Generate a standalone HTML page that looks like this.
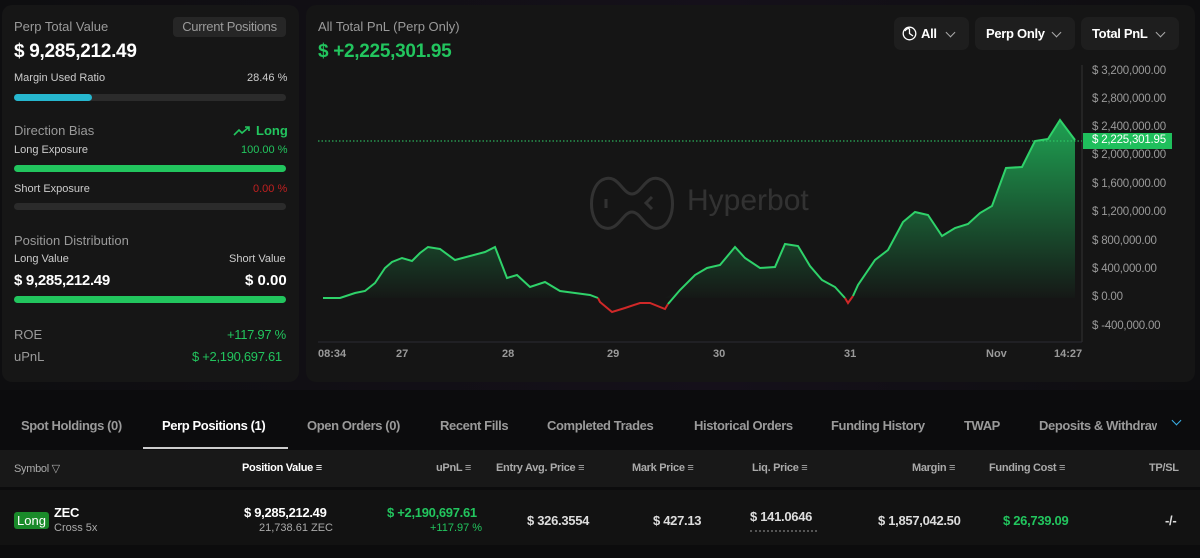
<!DOCTYPE html>
<html><head><meta charset="utf-8"><style>
*{margin:0;padding:0;box-sizing:border-box}
body{width:1200px;height:558px;overflow:hidden;background:#0c0c0d;font-family:"Liberation Sans",sans-serif;color:#fff;position:relative}
.top{position:absolute;left:0;top:0;width:1200px;height:390px;background:linear-gradient(90deg,#0e0e10,#15101a 60%,#0e0e10)}
.panel{position:absolute;background:#161616;border-radius:10px}
.t{position:absolute;white-space:nowrap}
.bar{position:absolute;height:7px;border-radius:4px;background:#2b2b2b}
.btn{position:absolute;top:17px;height:33px;background:#1e1e1e;border-radius:7px;font-weight:bold;font-size:13px;line-height:33px;padding-left:11px;letter-spacing:-0.3px;white-space:nowrap}
.chev{position:absolute;top:12px;width:7px;height:7px;border-right:1.3px solid #aaa;border-bottom:1.3px solid #aaa;transform:rotate(45deg)}
.yl{position:absolute;left:1092px;font-size:11.5px;color:#9a9a9a;letter-spacing:-0.2px;white-space:nowrap}
.xl{position:absolute;top:348px;font-size:11px;color:#9a9a9a;font-weight:bold}
.tab{position:absolute;top:418px;font-size:13px;color:#9a9a9a;font-weight:bold;letter-spacing:-0.4px;white-space:nowrap}
.th{position:absolute;top:462px;font-size:11px;color:#aaa;font-weight:bold;letter-spacing:-0.3px;white-space:nowrap}
.td{position:absolute;font-size:13px;font-weight:bold;color:#ddd;letter-spacing:-0.3px;white-space:nowrap}
.g{color:#22c55e !important}.gr{color:#9a9a9a}
</style></head><body>
<div class="top"></div>
<div class="panel" style="left:2px;top:5px;width:297px;height:377px"></div>
<div class="t gr" style="left:14px;top:19px;font-size:13px">Perp Total Value</div>
<div class="t" style="left:173px;top:17px;width:113px;height:20px;background:#262626;border-radius:4px;color:#9a9a9a;font-size:13px;text-align:center;line-height:20px;letter-spacing:-0.3px">Current Positions</div>
<div class="t" style="left:14px;top:41px;font-size:19px;font-weight:bold;letter-spacing:-0.3px">$ 9,285,212.49</div>
<div class="t" style="left:14px;top:72px;font-size:11px;color:#ccc">Margin Used Ratio</div>
<div class="t" style="left:247px;top:72px;font-size:11px;color:#ccc">28.46 %</div>
<div class="bar" style="left:14px;top:94px;width:272px"></div>
<div class="bar" style="left:14px;top:94px;width:78px;background:#26b7cf"></div>
<div class="t gr" style="left:14px;top:123px;font-size:13px">Direction Bias</div>
<svg style="position:absolute;left:233px;top:125px" width="18" height="12" viewBox="0 0 18 12"><path d="M1 10 L6 5 L9 8 L16 2 M12 2 H16 V6" stroke="#22c55e" stroke-width="1.6" fill="none"/></svg>
<div class="t g" style="left:256px;top:123px;font-size:13px;font-weight:bold">Long</div>
<div class="t" style="left:14px;top:144px;font-size:11px;color:#ccc">Long Exposure</div>
<div class="t g" style="left:241px;top:144px;font-size:11px">100.00 %</div>
<div class="bar" style="left:14px;top:165px;width:272px;background:#22c55e"></div>
<div class="t" style="left:14px;top:183px;font-size:11px;color:#ccc">Short Exposure</div>
<div class="t" style="left:253px;top:183px;font-size:11px;color:#c02020">0.00 %</div>
<div class="bar" style="left:14px;top:203px;width:272px"></div>
<div class="t gr" style="left:14px;top:233px;font-size:13px">Position Distribution</div>
<div class="t" style="left:14px;top:253px;font-size:11px;color:#ccc">Long Value</div>
<div class="t" style="left:229px;top:253px;font-size:11px;color:#ccc">Short Value</div>
<div class="t" style="left:14px;top:272px;font-size:15px;font-weight:bold;letter-spacing:-0.3px">$ 9,285,212.49</div>
<div class="t" style="left:245px;top:272px;font-size:15px;font-weight:bold">$ 0.00</div>
<div class="bar" style="left:14px;top:296px;width:272px;background:#22c55e"></div>
<div class="t gr" style="left:14px;top:327px;font-size:13px">ROE</div>
<div class="t g" style="left:227px;top:327px;font-size:13px;letter-spacing:-0.3px">+117.97 %</div>
<div class="t gr" style="left:14px;top:349px;font-size:13px">uPnL</div>
<div class="t g" style="left:192px;top:349px;font-size:13px;letter-spacing:-0.3px">$ +2,190,697.61</div>

<div class="panel" style="left:306px;top:5px;width:889px;height:377px;background:#151515"></div>
<div class="t gr" style="left:318px;top:19px;font-size:13px">All Total PnL (Perp Only)</div>
<div class="t g" style="left:318px;top:41px;font-size:19px;font-weight:bold;letter-spacing:-0.3px">$ +2,225,301.95</div>
<div class="btn" style="left:894px;width:75px"><svg style="position:absolute;left:8px;top:9px" width="15" height="15"><circle cx="7.5" cy="7.5" r="6.3" stroke="#fff" stroke-width="1.3" fill="none"/><path d="M3 5A5 5 0 0 1 7.5 2.5 M7.5 2.5V7.5L11 10" stroke="#fff" stroke-width="1.3" fill="none"/></svg><span style="margin-left:16px">All</span><span class="chev" style="left:53px"></span></div>
<div class="btn" style="left:975px;width:100px">Perp Only<span class="chev" style="left:78px"></span></div>
<div class="btn" style="left:1081px;width:98px">Total PnL<span class="chev" style="left:76px"></span></div>
<div class="t" style="left:590px;top:172px;opacity:.12">
<svg width="84" height="62" viewBox="0 0 84 62"><path d="M12 8 C28 0 32 22 42 22 C52 22 56 0 72 8 C86 16 86 48 72 55 C56 62 52 40 42 40 C32 40 28 62 12 55 C-2 48 -2 16 12 8Z" stroke="#fff" stroke-width="3" fill="none"/><path d="M16 27V36 M62 25L56 31L62 37" stroke="#fff" stroke-width="3" fill="none"/></svg>
<span style="position:absolute;left:97px;top:12px;font-size:30px;color:#fff">Hyperbot</span></div>
<svg style="position:absolute;left:0;top:0" width="1200" height="390">
<defs><linearGradient id="gg" x1="0" y1="120" x2="0" y2="298" gradientUnits="userSpaceOnUse"><stop offset="0" stop-color="#1fa855" stop-opacity=".95"/><stop offset="1" stop-color="#1fa855" stop-opacity="0.02"/></linearGradient></defs>
<line x1="1082" y1="65" x2="1082" y2="342" stroke="#333"/>
<line x1="318" y1="342" x2="1082" y2="342" stroke="#2a2a33"/>
<polygon fill="url(#gg)" points="323,298 340,298 355,293 365,291 375,283 385,268 392,262 402,258 412,261 420,253 428,247 440,249 455,260 470,256 485,252 495,247 507,278 517,275 530,287 545,282 560,291 575,293 590,295 598,298 665,298 680,290 695,275 707,268 720,265 735,247 745,258 760,268 775,267 785,244 798,246 810,266 822,280 835,287 845,298 855,298 858,285 875,260 888,250 903,222 915,212 928,215 942,236 955,228 968,224 980,213 992,206 1006,168 1022,167 1035,141 1048,139 1060,120 1075,140 1075,298"/>
<polyline fill="none" stroke="#2fd26a" stroke-width="2" points="323,298 340,298 355,293 365,291 375,283 385,268 392,262 402,258 412,261 420,253 428,247 440,249 455,260 470,256 485,252 495,247 507,278 517,275 530,287 545,282 560,291 575,293 590,295 598,298"/>
<polyline fill="none" stroke="#d02828" stroke-width="2" points="598,298 600,302 612,312 625,308 640,303 650,303 665,309 668,304"/>
<polyline fill="none" stroke="#2fd26a" stroke-width="2" points="668,304 680,290 695,275 707,268 720,265 735,247 745,258 760,268 775,267 785,244 798,246 810,266 822,280 835,287 845,298"/>
<polyline fill="none" stroke="#d02828" stroke-width="2" points="845,298 848,303 853,296"/>
<polyline fill="none" stroke="#2fd26a" stroke-width="2" points="853,296 858,285 875,260 888,250 903,222 915,212 928,215 942,236 955,228 968,224 980,213 992,206 1006,168 1022,167 1035,141 1048,139 1060,120 1075,140"/>
<line x1="318" y1="141" x2="1082" y2="141" stroke="#2fd26a" stroke-dasharray="1.5,2"/>
<rect x="1083" y="133" width="89" height="16" fill="#1fbf5c"/>
</svg>
<div class="yl" style="top:65px">$ 3,200,000.00</div>
<div class="yl" style="top:93px">$ 2,800,000.00</div>
<div class="yl" style="top:121px">$ 2,400,000.00</div>
<div class="yl" style="top:134px;color:#fff">$ 2,225,301.95</div>
<div class="yl" style="top:149px">$ 2,000,000.00</div>
<div class="yl" style="top:178px">$ 1,600,000.00</div>
<div class="yl" style="top:206px">$ 1,200,000.00</div>
<div class="yl" style="top:235px">$ 800,000.00</div>
<div class="yl" style="top:263px">$ 400,000.00</div>
<div class="yl" style="top:291px">$ 0.00</div>
<div class="yl" style="top:320px">$ -400,000.00</div>
<div class="xl" style="left:318px">08:34</div><div class="xl" style="left:396px">27</div><div class="xl" style="left:502px">28</div><div class="xl" style="left:607px">29</div><div class="xl" style="left:713px">30</div><div class="xl" style="left:844px">31</div><div class="xl" style="left:986px">Nov</div><div class="xl" style="left:1054px">14:27</div>

<div class="tab" style="left:21px">Spot Holdings (0)</div>
<div class="tab" style="left:162px;color:#fff">Perp Positions (1)</div>
<div style="position:absolute;left:143px;top:447px;width:145px;height:2px;background:#ccc"></div>
<div class="tab" style="left:307px">Open Orders (0)</div>
<div class="tab" style="left:440px">Recent Fills</div>
<div class="tab" style="left:547px">Completed Trades</div>
<div class="tab" style="left:694px">Historical Orders</div>
<div class="tab" style="left:831px">Funding History</div>
<div class="tab" style="left:964px">TWAP</div>
<div class="tab" style="left:1039px;width:118px;overflow:hidden">Deposits &amp; Withdrawals</div>
<div class="chev" style="left:1173px;top:417px;border-color:#3ab0e8"></div>
<div style="position:absolute;left:0;top:450px;width:1200px;height:37px;background:#181818"></div>
<div class="th" style="left:14px;font-weight:normal">Symbol ▽</div>
<div class="th" style="left:242px;color:#fff">Position Value ≡</div>
<div class="th" style="left:436px">uPnL ≡</div>
<div class="th" style="left:496px">Entry Avg. Price ≡</div>
<div class="th" style="left:632px">Mark Price ≡</div>
<div class="th" style="left:752px">Liq. Price ≡</div>
<div class="th" style="left:912px">Margin ≡</div>
<div class="th" style="left:989px">Funding Cost ≡</div>
<div class="th" style="left:1149px">TP/SL</div>
<div style="position:absolute;left:0;top:490px;width:1200px;height:55px;background:#121212"></div>
<div class="t" style="left:14px;top:512px;background:#1a8a2a;color:#fff;font-size:13px;padding:1px 3px;border-radius:3px">Long</div>
<div class="td" style="left:54px;top:505px;color:#fff">ZEC</div>
<div class="t" style="left:54px;top:522px;font-size:11px;color:#aaa">Cross 5x</div>
<div class="td" style="left:244px;top:505px;color:#fff">$ 9,285,212.49</div>
<div class="t" style="left:259px;top:522px;font-size:11px;color:#aaa">21,738.61 ZEC</div>
<div class="td g" style="left:387px;top:505px">$ +2,190,697.61</div>
<div class="t g" style="left:430px;top:522px;font-size:11px">+117.97 %</div>
<div class="td" style="left:527px;top:513px">$ 326.3554</div>
<div class="td" style="left:653px;top:513px">$ 427.13</div>
<div class="td" style="left:750px;top:509px">$ 141.0646</div>
<div style="position:absolute;left:750px;top:530px;width:67px;border-top:2px dotted #555"></div>
<div class="td" style="left:878px;top:513px">$ 1,857,042.50</div>
<div class="td g" style="left:1003px;top:513px">$ 26,739.09</div>
<div class="td" style="left:1165px;top:513px">-/-</div>
</body></html>
